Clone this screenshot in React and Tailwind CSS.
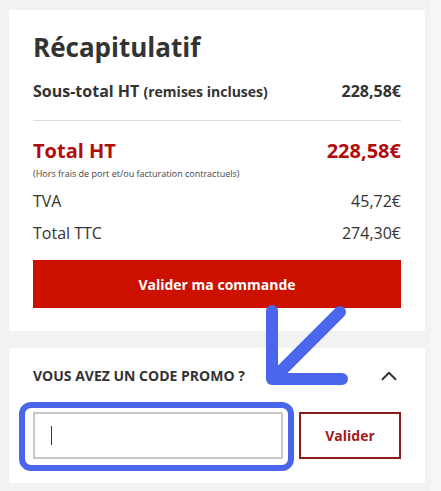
import { ChevronUp } from 'lucide-react';

const Row = ({ label, value, className }) => (
	<div className={`flex justify-between items-center ${className}`}>
		<span>{label}</span>
		<span>{value}</span>
	</div>
);

const Annotation = () => (
	<svg className="absolute left-0 top-0 pointer-events-none" width="441" height="491" viewBox="0 0 441 491">
		<rect x="22" y="405" width="269" height="63" rx="9" fill="none" stroke="#4a66ec" strokeWidth="6" />
		<g stroke="#4a66ec" strokeWidth="12" strokeLinecap="round" strokeLinejoin="round" fill="none">
			<path d="M340 312 L276 376" />
			<path d="M272 311 L272 379 L342 379" />
		</g>
	</svg>
);

const App = () => {
	return (
		<div className="relative w-[441px] h-[491px] flex bg-[#f6f6f6] font-['Open_Sans',sans-serif] text-[#333] overflow-hidden">
			<div className="w-[430px] bg-[#f2f2f2] pl-[9px] pr-[5px] pt-[10px]">
				<div className="bg-white px-6 pt-[21px] pb-[23px]">
					<h1 className="text-[26px] leading-[32px] font-bold">Récapitulatif</h1>
					<div className="mt-4 flex justify-between items-baseline leading-[24px] font-bold">
						<span className="text-[16px]">
							Sous-total HT <span className="text-[14px]">(remises incluses)</span>
						</span>
						<span className="text-[16px]">228,58€</span>
					</div>
					<div className="mt-4 h-px bg-[#dcdcdc]" />
					<Row label="Total HT" value="228,58€" className="mt-4 text-[20px] leading-[28px] font-bold text-[#b30c0c]" />
					<div className="mt-[3px] text-[9px] leading-[12px] text-[#444]">(Hors frais de port et/ou facturation contractuels)</div>
					<Row label="TVA" value="45,72€" className="mt-[9px] text-[16px] leading-[24px]" />
					<Row label="Total TTC" value="274,30€" className="mt-[8px] text-[16px] leading-[24px]" />
					<button className="mt-[15px] w-full h-12 bg-[#cc1100] text-white text-[14px] font-bold">
						Valider ma commande
					</button>
				</div>
				<div className="mt-[17px] bg-white px-6 pt-[18px] pb-6">
					<div className="flex justify-between items-center h-5">
						<span className="text-[14px] leading-[20px] font-bold uppercase">Vous avez un code promo ?</span>
						<ChevronUp size={26} strokeWidth={1.8} className="text-[#333] -mr-px" />
					</div>
					<div className="mt-[26px] flex gap-4">
						<div className="w-[250px] h-[47px] border-2 border-[#c8c8c8] flex items-center pl-4">
							<div className="w-px h-[19px] bg-[#333]" />
						</div>
						<button className="flex-1 h-[47px] border-2 border-[#8e1b1b] text-[#a3191b] text-[14px] font-bold">
							Valider
						</button>
					</div>
				</div>
			</div>
			<Annotation />
		</div>
	);
};

export default App;
